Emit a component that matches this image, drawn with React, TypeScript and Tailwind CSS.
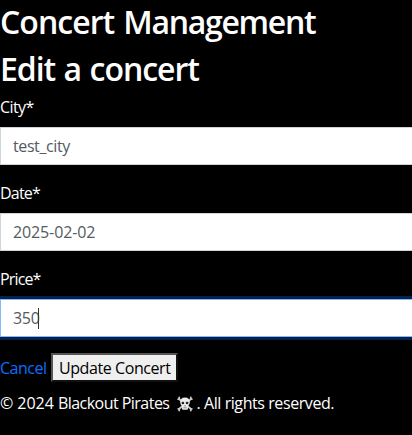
import React from 'react';

function SkullIcon() {
  return (
    <svg viewBox="0 0 16 16" className="ml-[8px] inline-block h-4 w-4 align-[-3px]" aria-hidden="true">
      <g stroke="#c8c8c8" strokeWidth="1.8" strokeLinecap="round">
        <path d="M2 3 14 13M14 3 2 13" />
        <path d="M2.200 1.500v1.700H1.200M13.800 1.500v1.700h1M2.200 14.500v-1.700H1.200M13.800 14.500v-1.700h1" />
      </g>
      <path d="M8 1.500C5 1.500 3.200 3.400 3.200 6c0 1.900.7 3.100 1.800 3.900v2.600c0 .8.700 1.300 1.500 1.300h3c.8 0 1.500-.5 1.500-1.300V9.900c1.100-.8 1.800-2 1.800-3.900C12.800 3.400 11 1.500 8 1.500Z" fill="#ededed" />
      <circle cx="5.900" cy="7" r="1.350" fill="#222" />
      <circle cx="10.100" cy="7" r="1.350" fill="#222" />
      <path d="m8 8.900-.8 1.300h1.600Z" fill="#333" />
      <path d="M6.200 11.800h3.600" stroke="#777" strokeWidth=".8" />
    </svg>
  );
}

function Field({
  label,
  value,
  focused = false,
  labelTracking,
  tracking,
}: {
  label: string;
  value: string;
  focused?: boolean;
  labelTracking: string;
  tracking: string;
}) {
  return (
    <div className="mb-4">
      <div className={`mb-2 h-6 whitespace-nowrap ${labelTracking}`}>{label}</div>
      <div
        className={`flex h-[38px] w-[440px] items-center border px-3 text-[#545b62] ${
          focused ? 'border-[#86b7fe] shadow-[0_0_0_3px_#03234b]' : 'border-[#ced4da]'
        } bg-white`}
      >
        <span className={tracking}>{value}</span>
        {focused && <span className="-ml-[1.5px] h-[21px] w-px bg-[#333]" />}
      </div>
    </div>
  );
}

export default function App() {
  return (
    <main className="h-[435px] w-full overflow-hidden bg-black pt-[3px] font-['Open_Sans','Noto_Sans',sans-serif] text-base leading-6 text-white">
      <h1 className="mb-[9px] h-[38px] text-[32px] leading-[38px] font-semibold whitespace-nowrap">
        <span className="tracking-[-0.95px]">Concert</span>
        <span className="ml-[9px] tracking-[-1.3px]">Management</span>
      </h1>
      <h2 className="mb-[7px] h-[38px] text-[32px] leading-[38px] font-semibold whitespace-nowrap">
        <span className="tracking-[-1.05px] [word-spacing:1.2px]">Edit a concert</span>
      </h2>
      <form>
        <Field label="City*" value="test_city" labelTracking="tracking-[-0.6px]" tracking="tracking-[-0.4px]" />
        <Field label="Date*" value="2025-02-02" labelTracking="tracking-[-0.8px]" tracking="tracking-[-0.12px]" />
        <Field label="Price*" value="350" labelTracking="tracking-[-0.85px]" tracking="tracking-[-0.3px]" focused />
        <div className="flex h-[29px] items-center whitespace-nowrap">
          <a className="w-[51px] pt-px tracking-[-0.5px] text-[#0d6efd]">Cancel</a>
          <button
            type="button"
            className="flex h-[29px] w-[127px] items-center border-2 border-t-[#555] border-r-[#111] border-b-[#111] border-l-[#555] bg-[#efefef] pt-px pl-[6px] text-black"
          >
            <span className="tracking-[-0.42px]">Update Concert</span>
          </button>
        </div>
      </form>
      <footer className="mt-[9px] whitespace-nowrap">
        <span className="tracking-[-0.05px]">© 2024 </span>
        <span className="tracking-[-0.53px]">Blackout Pirates</span>
        <SkullIcon />
        <span className="ml-[3px] tracking-[-0.42px]">. All rights reserved.</span>
      </footer>
    </main>
  );
}
